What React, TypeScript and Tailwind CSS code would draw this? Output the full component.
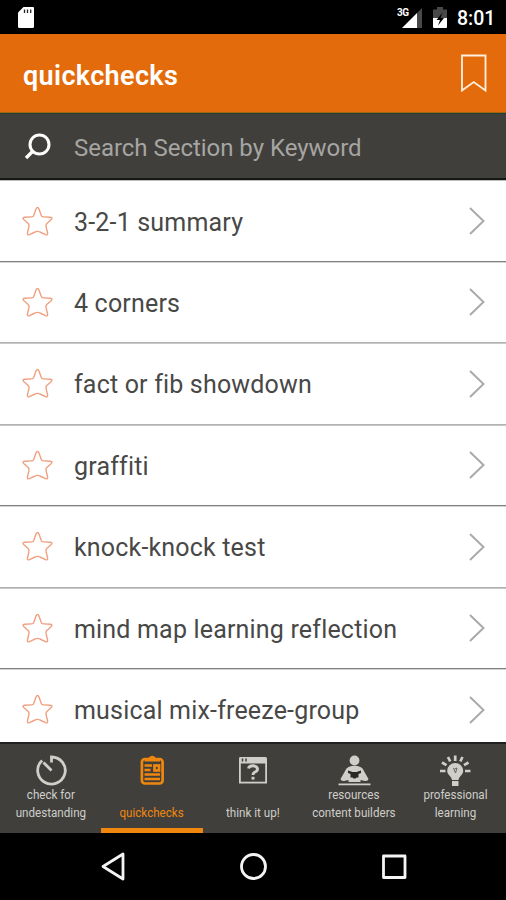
import type { ReactNode } from 'react';

const DARK = 'border-[#808080] shadow-[0_1px_0_#d4d4d4]';
const LIGHT = 'border-[#b2b2b2] shadow-[0_1px_0_#c8c8c8]';

const rows = [
  { label: '3-2-1 summary', size: 'h-[81px]', line: DARK },
  { label: '4 corners', size: 'h-[81px]', line: LIGHT },
  { label: 'fact or fib showdown', size: 'h-[82px]', line: LIGHT },
  { label: 'graffiti', size: 'h-[81px]', line: DARK },
  { label: 'knock-knock test', size: 'h-[82px]', line: LIGHT },
  { label: 'mind map learning reflection', size: 'h-[81px]', line: DARK },
  { label: 'musical mix-freeze-group', size: 'h-[82px]', line: 'border-transparent' },
];

function StatusBar() {
  return (
    <div className="flex h-[34px] shrink-0 items-start bg-black pl-[18px] pr-[10px] text-white">
      <svg className="mt-[7px]" width="17" height="21" viewBox="0 0 17 21">
        <path d="M5.500 0H15Q16 0 16 1V19.500Q16 21 14.500 21H1.500Q0 21 0 19.500V5.500Z" fill="#fff" />
        <path d="M6.500 2.500V6M9.500 2.500V6M12.700 2.500V6" stroke="#222" strokeWidth="1.300" />
      </svg>
      <div className="ml-auto flex">
        <div className="relative h-7 w-[27px]">
          <span className="absolute -left-px top-[7px] text-[10px] font-bold leading-[11px] tracking-[-0.4px]">3G</span>
          <svg className="absolute left-[4px] top-[8px]" width="21" height="20" viewBox="0 0 21 20">
            <path d="M20 0V20H15V5Z" fill="#484848" />
            <path d="M15 5V20H0Z" fill="#fff" />
          </svg>
        </div>
        <svg className="ml-[8px] mt-[7px]" width="15" height="21" viewBox="0 0 15 21">
          <path d="M4 0H10V2.500H14V11H0V2.500H4Z" fill="#484848" />
          <path d="M0 11H14V20Q14 21 13 21H1Q0 21 0 20Z" fill="#fff" />
          <path d="M9.500 5.500L3.500 13H7L5 18.500L11 11H7.500Z" fill="#000" />
        </svg>
        <span className="ml-[9px] mt-[7px] w-[39px] whitespace-nowrap text-[19.500px] font-medium leading-[23px]">8:01</span>
      </div>
    </div>
  );
}

function Star() {
  return (
    <svg className="ml-[22px] mt-[1px] shrink-0" width="32" height="32" viewBox="0 0 32 32" fill="none" stroke="#f0a080" strokeWidth="1.400" strokeLinejoin="round">
      <path d="M15.500 1.500Q16.400 1.500 17 3L19 8.800Q19.500 10.800 21.500 10.900L28.500 11.300Q31 11.600 29.300 13.500L24.800 17.500Q23.500 18.800 24.100 20.800L25.600 27Q25.800 29.600 23.500 28.600L18 26Q15.500 24.700 13 26L7.500 28.600Q5.200 29.600 5.400 27L6.900 20.800Q7.500 18.800 6.200 17.500L1.700 13.500Q0 11.600 2.500 11.300L9.500 10.900Q11.500 10.800 12 8.800L14 3Q14.600 1.500 15.500 1.500Z" />
    </svg>
  );
}

function Tab({ icon, lines, active }: { icon: ReactNode; lines: string[]; active?: boolean }) {
  return (
    <div className={`relative flex flex-1 flex-col items-center ${active ? 'text-[#ef870e]' : 'text-[#cfcec8]'}`}>
      <div className="mt-[10px] h-[32px]">{icon}</div>
      <div className="flex h-[36px] scale-x-93 flex-col justify-end whitespace-nowrap text-center text-[12.500px] leading-[18px]">
        {lines.map((line) => <span key={line}>{line}</span>)}
      </div>
      {active && <div className="absolute bottom-0 h-[5px] w-[102px] bg-[#ef870e]" />}
    </div>
  );
}

const timer = (
  <svg width="32" height="32" viewBox="0 0 32 32" fill="none" stroke="currentColor">
    <path d="M16.500 8.500V3A13.800 13.500 0 1 1 7.200 6.500" strokeWidth="2.800" />
    <path d="M8.500 8.500L16.500 16.500" strokeWidth="2.800" />
  </svg>
);

const clipboard = (
  <svg width="32" height="32" viewBox="0 0 32 32" fill="none" stroke="currentColor">
    <rect x="5.900" y="5" width="20.700" height="24.500" rx="3" strokeWidth="2.700" />
    <path d="M8.500 7.500V4H12.500Q16 -.5 20 4H24V7.500Z" fill="currentColor" stroke="none" />
    <path d="M8.500 11.500H16M8.500 16H14.500M8.500 20.500H24M8.500 25H24" strokeWidth="2.300" />
    <rect x="18.500" y="11.500" width="4.500" height="5" strokeWidth="2.700" />
  </svg>
);

const question = (
  <svg width="32" height="32" viewBox="0 0 32 32">
    <path d="M3 3H28.500Q30 3 30 4.500V29.500H2V4.500Q2 3 3 3Z" fill="currentColor" />
    <path d="M3.800 9.500H28.200V27.700H3.800Z" fill="#403f3c" />
    <path d="M5.500 4.500V7.500M9 4.500V7.500" stroke="#403f3c" strokeWidth="1.500" />
    <path d="M11.500 14.500Q12 11.800 16 11.800T20.500 15Q20.500 17 18 18Q16 18.800 16 21" fill="none" stroke="currentColor" strokeWidth="2.900" />
    <path d="M14.500 22.800H17.500V25.600H14.500Z" fill="currentColor" />
  </svg>
);

const reader = (
  <svg width="34" height="32" viewBox="0 0 34 32" fill="currentColor">
    <circle cx="17.500" cy="6.500" r="4.900" />
    <path d="M11.500 13Q17.500 10.500 23.500 13Q26 14 27.500 18L31.500 25Q31 28 26 26.500L23.500 26V28H11.500V26L9 26.500Q4 28 3.500 25L7.500 18Q9 14 11.500 13Z" />
    <path d="M11 16.500L15.500 18H19.500L24 16.500V19L21.500 20V23.500H19.500L18.500 24.500H16.500L15.500 23.500H13.500V20L11 19Z" fill="#292a28" />
    <path d="M1.500 29.500H33.500V31.200H1.500Z" />
  </svg>
);

const bulb = (
  <svg width="32" height="32" viewBox="0 0 32 32">
    <path d="M8.200 17A8 8 0 1 1 24.200 17C24.200 21 20 22 19.500 26H13C12.500 22 8.200 21 8.200 17ZM13 27H19.500V32H13Z" fill="currentColor" />
    <path d="M1 17H6.500M26 17H31.500M3 8.500L7.500 11.200M29.500 8.500L25 11.200M9 3L11.200 7.500M23.500 3L21.300 7.500M16.200 1.500V7" stroke="currentColor" strokeWidth="2.700" />
    <path d="M14.500 14L16.500 19L18 14L15.500 15" fill="none" stroke="#686761" strokeWidth="1" />
  </svg>
);

export default function App() {
  return (
    <div className="flex h-[900px] w-[506px] flex-col overflow-hidden bg-white font-['Roboto',sans-serif]">
      <StatusBar />
      <header className="flex h-[79px] shrink-0 items-center justify-between border-b border-[#a3680f] bg-[#e36b0c] pl-[23px] pr-[19px] text-white">
        <h1 className="mt-[5px] text-[27px] font-semibold leading-8 tracking-[0.35px]">quickchecks</h1>
        <svg width="27" height="38" viewBox="0 0 27 38" fill="none" stroke="#fff0df" strokeWidth="1.800">
          <path d="M2 1.500H25.500V36.500L13.700 28L2 36.500Z" />
        </svg>
      </header>
      <div className="flex h-[67px] shrink-0 items-center border-b-2 border-t border-b-[#161612] border-t-[#233d32] bg-[#403f3c]">
        <svg className="ml-[24px] mt-[2px]" width="29" height="29" viewBox="0 0 29 29" fill="none" stroke="#fff">
          <circle cx="15.500" cy="11.500" r="9.500" strokeWidth="3" />
          <path d="M9 18L2 25" strokeWidth="3.300" />
        </svg>
        <span className="ml-[21px] mt-[4px] text-[24px] leading-8 tracking-[-0.03px] text-[#a6a5a2]">Search Section by Keyword</span>
      </div>
      <main className="flex h-[562px] shrink-0 flex-col overflow-hidden border-t border-[#bcbcbc]">
        {rows.map((row) => (
          <div key={row.label} className={`flex shrink-0 items-center border-b ${row.size} ${row.line}`}>
            <Star />
            <span className="ml-[20px] mt-[3px] whitespace-nowrap text-[25px] leading-8 tracking-[0.18px] text-[#484847]">{row.label}</span>
            <svg className="ml-auto mr-[20px]" width="18" height="30" viewBox="0 0 18 30" fill="none" stroke="#aaa" strokeWidth="2">
              <path d="M2 2L15.500 15L2 28" />
            </svg>
          </div>
        ))}
      </main>
      <nav className="flex h-[91px] shrink-0 border-t-2 border-[#20201e] bg-[#403f3c]">
        <Tab icon={timer} lines={['check for', 'undestanding']} />
        <Tab icon={clipboard} lines={['quickchecks']} active />
        <Tab icon={question} lines={['think it up!']} />
        <Tab icon={reader} lines={['resources', 'content builders']} />
        <Tab icon={bulb} lines={['professional', 'learning']} />
      </nav>
      <footer className="flex h-[67px] shrink-0 items-center bg-black">
        <svg width="506" height="67" viewBox="0 0 506 67" fill="none" stroke="#f4f4f4" strokeWidth="2.800" strokeLinejoin="round">
          <path d="M123 21V46L103 33.500Z" />
          <circle cx="253.500" cy="33.500" r="12" />
          <rect x="383.500" y="23" width="21.500" height="21.500" />
        </svg>
      </footer>
    </div>
  );
}
